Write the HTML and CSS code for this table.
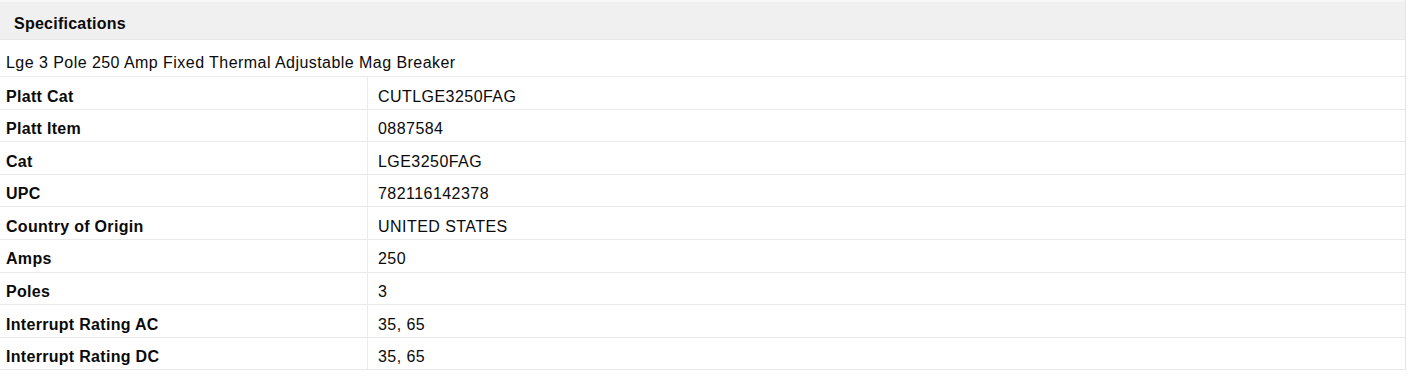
FILE: index.html
```html
<!DOCTYPE html>
<html>
<head>
<meta charset="utf-8">
<link rel="stylesheet" href="styles.css">
</head>
<body>
<div class="specs">
  <div class="specs-header">Specifications</div>
  <div class="specs-desc">Lge 3 Pole 250 Amp Fixed Thermal Adjustable Mag Breaker</div>
  <div class="specs-list">
    <div class="row"><div class="label">Platt Cat</div><div class="value">CUTLGE3250FAG</div></div>
    <div class="row"><div class="label">Platt Item</div><div class="value">0887584</div></div>
    <div class="row"><div class="label">Cat</div><div class="value">LGE3250FAG</div></div>
    <div class="row"><div class="label">UPC</div><div class="value">782116142378</div></div>
    <div class="row"><div class="label">Country of Origin</div><div class="value">UNITED STATES</div></div>
    <div class="row"><div class="label">Amps</div><div class="value">250</div></div>
    <div class="row"><div class="label">Poles</div><div class="value">3</div></div>
    <div class="row"><div class="label">Interrupt Rating AC</div><div class="value">35, 65</div></div>
    <div class="row"><div class="label">Interrupt Rating DC</div><div class="value">35, 65</div></div>
  </div>
</div>
</body>
</html>
```

FILE: styles.css
```css
html, body {
  margin: 0;
  padding: 0;
  background: #fff;
}
body {
  font-family: "Liberation Sans", Arial, sans-serif;
  font-size: 16px;
  line-height: 18.4px;
  color: #0a0a0a;
  letter-spacing: 0.45px;
}
.specs {
  width: 1406px;
  border-right: 1px solid #e4e4e4;
  box-sizing: border-box;
}
.specs-header {
  height: 40px;
  box-sizing: border-box;
  background: #f0f0f0;
  border-top: 2px solid #f7f7f7;
  border-bottom: 1px solid #e6e6e6;
  padding: 13px 0 0 14px;
  font-weight: bold;
  letter-spacing: 0.25px;
}
.specs-desc {
  height: 37px;
  box-sizing: border-box;
  padding: 14px 0 0 6px;
  border-bottom: 1px solid #e9e9e9;
}
.specs-list {
  display: flex;
  flex-direction: column;
}
.row {
  display: grid;
  grid-template-columns: 368px 1fr;
  height: 32.6px;
  box-sizing: border-box;
  border-bottom: 1px solid #e9e9e9;
}
.label,
.value {
  padding-top: 10.5px;
}
.label {
  padding-left: 6px;
  font-weight: bold;
  letter-spacing: 0.3px;
  border-right: 1px solid #ececec;
}
.value {
  padding-left: 10px;
}
```
